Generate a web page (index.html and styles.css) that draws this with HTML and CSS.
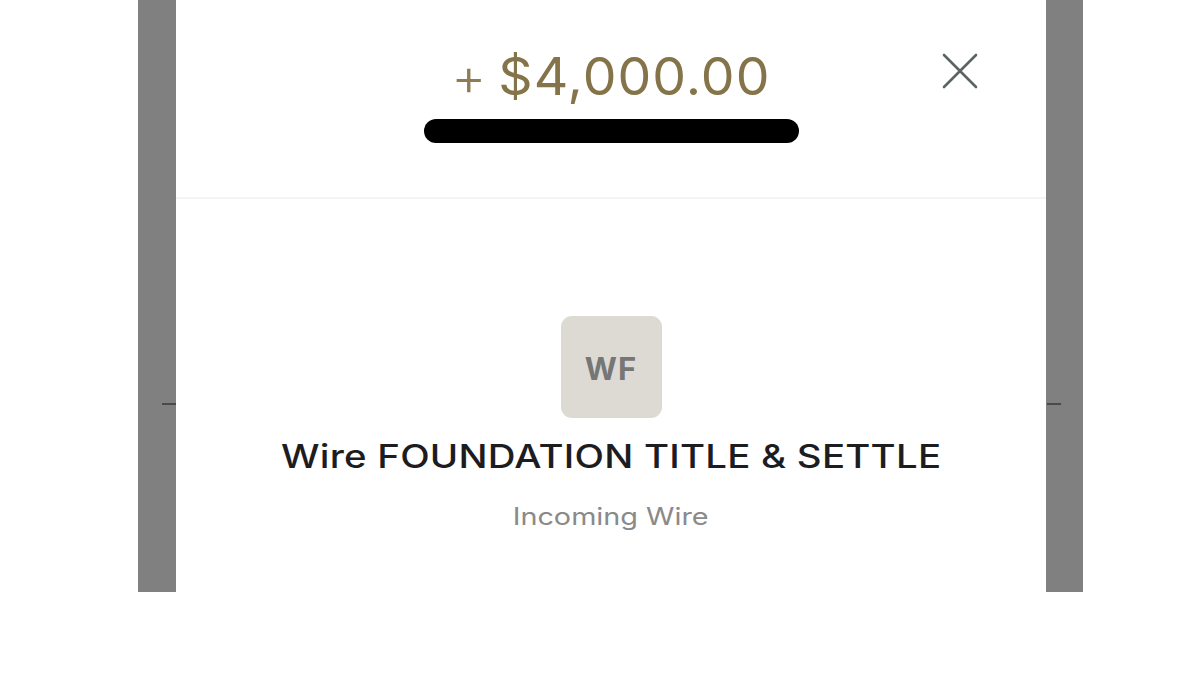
FILE: index.html
```html
<!DOCTYPE html>
<html lang="en">
<head>
<meta charset="utf-8">
<title>Transaction</title>
<link rel="stylesheet" href="styles.css">
</head>
<body>
<div class="frame">
  <span class="tick tick-left"></span>
  <span class="tick tick-right"></span>
  <div class="card">
    <header class="head">
      <div class="amount"><span class="sign">+</span> $4,000.00</div>
      <div class="redact"></div>
      <button class="close" aria-label="Close">
        <svg width="36" height="36" viewBox="0 0 36 36"><path d="M2 2 L34 34 M34 2 L2 34" stroke="#5b6461" stroke-width="2.6" stroke-linecap="round" fill="none"/></svg>
      </button>
    </header>
    <section class="detail">
      <div class="avatar">WF</div>
      <h1 class="name">Wire FOUNDATION TITLE &amp; SETTLE</h1>
      <p class="kind">Incoming Wire</p>
    </section>
  </div>
</div>
</body>
</html>
```
FILE: styles.css
```css
* { box-sizing: border-box; }
html, body { margin: 0; padding: 0; background: #ffffff; }
body { font-family: Inter, "Liberation Sans", Arial, sans-serif; width: 1200px; height: 675px; overflow: hidden; }
.frame {
  position: relative;
  margin-left: 138px;
  width: 945px;
  height: 592px;
  background: #808080;
  padding: 0 37px 0 38px;
}
.tick { position: absolute; top: 403px; height: 2px; width: 14px; background: #4a4a4a; }
.tick-left { left: 24px; }
.tick-right { right: 22px; }
.card { background: #ffffff; height: 100%; display: flex; flex-direction: column; }
.head {
  position: relative;
  height: 199px;
  border-bottom: 2px solid #f4f4f3;
  display: flex;
  flex-direction: column;
  align-items: center;
  padding-top: 47px;
}
.amount {
  font-size: 52px;
  line-height: 60px;
  color: #857449;
  font-weight: 400;
  letter-spacing: 1px;
  word-spacing: -5px;
  transform: scaleX(1.03);
}
.sign { font-weight: 300; color: #8c7d55; }
.redact {
  margin-top: 12px;
  width: 375px;
  height: 24px;
  border-radius: 12px;
  background: #000000;
}
.close {
  position: absolute;
  top: 53px;
  right: 68px;
  width: 36px;
  height: 36px;
  padding: 0;
  border: 0;
  background: transparent;
}
.close svg { display: block; }
.detail {
  display: flex;
  flex-direction: column;
  align-items: center;
  padding-top: 117px;
}
.avatar {
  width: 101px;
  height: 102px;
  border-radius: 11px;
  background: #dcdad3;
  color: #767676;
  font-weight: 700;
  font-size: 31px;
  display: flex;
  align-items: center;
  justify-content: center;
  letter-spacing: 1px;
  padding-top: 2px;
}
.name {
  margin: 17px 0 0;
  font-size: 32px;
  line-height: 44px;
  font-weight: 500;
  letter-spacing: 0.2px;
  color: #1d1d1f;
  transform: scaleX(1.2);
}
.kind {
  margin: 23px 0 0;
  font-size: 24px;
  line-height: 30px;
  letter-spacing: 0;
  color: #8a8a8a;
  transform: scaleX(1.2);
}
```
